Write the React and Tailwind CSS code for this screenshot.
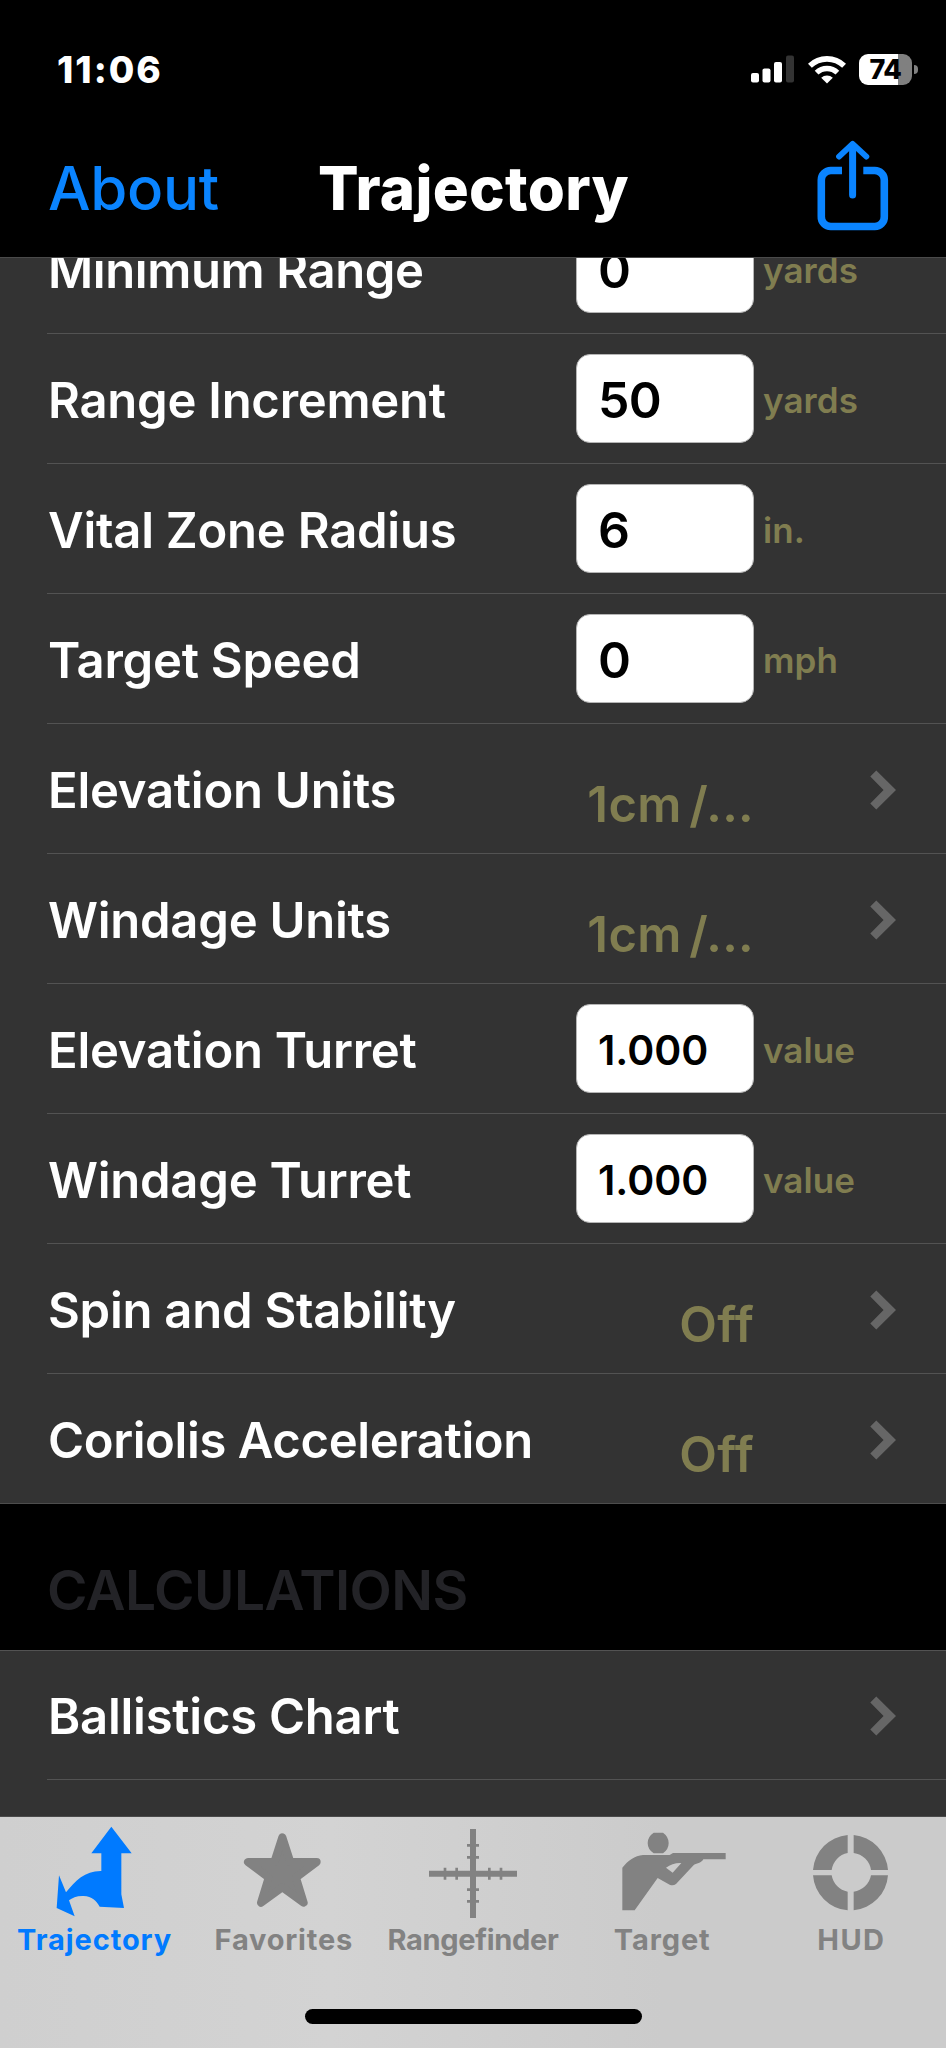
import React from "react";

const settings = [
  { label: "Minimum Range", input: "0", unit: "yards", tight: true },
  { label: "Range Increment", input: "50", unit: "yards" },
  { label: "Vital Zone Radius", input: "6", unit: "in." },
  { label: "Target Speed", input: "0", unit: "mph" },
  { label: "Elevation Units", value: "1cm /..." },
  { label: "Windage Units", value: "1cm /..." },
  { label: "Elevation Turret", input: "1.000", unit: "value", small: true },
  { label: "Windage Turret", input: "1.000", unit: "value", small: true },
  { label: "Spin and Stability", value: "Off" },
  { label: "Coriolis Acceleration", value: "Off", tight: true, last: true },
];

const Chevron = () => (
  <svg width="26" height="40" viewBox="0 0 26 40" fill="#666666" className="mt-[2px] shrink-0">
    <path d="M6.3 0.5 L26 20 L6.3 39.4 L0.3 33.4 L13.6 20 L0.3 6.6 Z" />
  </svg>
);

const Row = ({ label, input, unit, value, small, tight, last }) => (
  <div className={last ? "border-b border-[#4d4d4d]" : ""}>
    <div
      className={`ml-[47px] flex items-center pl-px ${
        last ? "h-[129px]" : "h-[130px] border-b border-[#535353]"
      }`}
    >
      <span
        className={`w-[528px] shrink-0 pt-[3px] text-[49px] leading-none font-semibold whitespace-nowrap text-white ${
          tight ? "tracking-[-0.4px]" : "tracking-[-0.25px]"
        }`}
      >
        {label}
      </span>
      {input ? (
        <>
          <input
            defaultValue={input}
            className={`h-[89px] w-[178px] shrink-0 rounded-[14px] border border-[#b5b5b5] bg-white pt-[3px] pl-[21px] font-semibold text-black outline-none ${
              small ? "text-[41px]" : "text-[50px] tracking-[-0.6px]"
            }`}
          />
          <span className="ml-[9px] pt-[3px] text-[35px] leading-none font-semibold tracking-[0.1px] text-[#807d50]">
            {unit}
          </span>
        </>
      ) : (
        <>
          <span className="w-[178px] shrink-0 pt-[31px] text-right text-[49px] leading-none font-semibold tracking-[0.3px] whitespace-nowrap text-[#807d50] [word-spacing:-5px]">
            {value}
          </span>
          <span className="ml-[116px]">
            <Chevron />
          </span>
        </>
      )}
    </div>
  </div>
);

const StatusBar = () => (
  <div className="flex h-[138px] items-center justify-between pr-[28px] pl-[57px] text-white">
    <span className="text-[37px] leading-none font-extrabold tracking-[2px]">11:06</span>
    <div className="flex items-center">
      <svg width="43" height="28" viewBox="0 0 43 28" fill="#ffffff">
        <rect x="0" y="18" width="8" height="9.5" rx="2" />
        <rect x="11.5" y="13.5" width="8" height="14" rx="2" />
        <rect x="23" y="7" width="8" height="20.5" rx="2" />
        <rect x="35" y="0.5" width="8" height="27" rx="2" fill="#333333" />
      </svg>
      <svg width="38" height="29" viewBox="0 0 38 29" fill="none" stroke="#ffffff" className="ml-[14px]">
        <path d="M1.9 10.8 A24.5 24.5 0 0 1 36.1 10.8" strokeWidth="5.6" />
        <path d="M8.6 17.6 A15.2 15.2 0 0 1 29.4 17.6" strokeWidth="5.4" />
        <path d="M19 28.5 L13.2 22.7 A8.6 8.6 0 0 1 24.8 22.7 Z" fill="#ffffff" stroke="none" />
      </svg>
      <div className="ml-[13px] flex h-[31px] w-[53px] items-center justify-center rounded-[9px] bg-linear-to-r from-white from-74% to-[#808080] to-74% text-[27px] leading-none font-extrabold tracking-[-0.5px] text-black">
        74
      </div>
      <div className="ml-[2px] h-[9px] w-[4px] rounded-r-full bg-[#808080]" />
    </div>
  </div>
);

const NavBar = () => (
  <div className="flex h-[119px] items-center pr-[57px] pb-[19px] pl-[48px]">
    <span className="w-[270px] text-[60px] leading-none font-medium tracking-[-0.3px] text-[#0a84ff]">About</span>
    <h1 className="flex-1 text-[60px] leading-none font-extrabold tracking-[0.3px] text-white">Trajectory</h1>
    <svg
      width="72"
      height="92"
      viewBox="0 0 72 92"
      fill="none"
      stroke="#0a84ff"
      strokeWidth="7.6"
      className="-mt-[4px]"
    >
      <path d="M25 30.5 H14 A9.5 9.5 0 0 0 4.3 40 V76.5 A9.5 9.5 0 0 0 14 86.5 H57.5 A9.5 9.5 0 0 0 67.3 76.5 V40 A9.5 9.5 0 0 0 57.5 30.5 H46.3" />
      <path d="M35.6 55 V5.5" strokeWidth="7" strokeLinecap="round" />
      <path d="M22 16.6 L35.6 3.8 L49.4 16.6" strokeWidth="5.8" strokeLinecap="round" strokeLinejoin="round" />
    </svg>
  </div>
);

const tabs = [
  {
    label: "Trajectory",
    text: "tracking-[0.9px]",
    active: true,
    viewBox: "86 72 396 285",
    icon: (
      <path d="M333 80 L394 160 H363 V283 L371 324 L298 320 C288 302 275 289 250 288 C230 287 216 293 206 301 L223 349 L169 324 L176 226 L197 277 C225 242 255 212 303 213 V160 H273 Z" />
    ),
  },
  {
    label: "Favorites",
    text: "tracking-[0.8px]",
    viewBox: "653 72 396 285",
    icon: (
      <path
        d="M846 112 L870 186 H949 L887 233 L910 308 L846 262 L782 308 L805 233 L743 186 H822 Z"
        stroke="currentColor"
        strokeWidth="24"
        strokeLinejoin="round"
      />
    ),
  },
  {
    label: "Rangefinder",
    text: "tracking-[-0.3px]",
    viewBox: "81 72 396 285",
    icon: (
      <path d="M270 87 h18 v267 h-18 Z M147 212 h264 v18 h-264 Z M261 132 h36 v8 h-36 Z M261 168 h36 v8 h-36 Z M261 265 h36 v8 h-36 Z M261 300 h36 v8 h-36 Z M191 203 h8 v36 h-8 Z M226 203 h8 v36 h-8 Z M324 203 h8 v36 h-8 Z M359 203 h8 v36 h-8 Z" />
    ),
  },
  {
    label: "Target",
    text: "tracking-[0.9px]",
    viewBox: "649 72 396 285",
    icon: (
      <path
        fillRule="evenodd"
        d="M822 98 H850 Q867 110 867 129 Q867 148 850 160 H822 Q804 148 804 129 Q804 110 822 98 Z M728 331 V203 C745 182 765 167 790 165 H870 L880 159 H1038 V178 H971 C967 187 957 189 943 194 L889 252 Q880 259 870 254 L834 234 L765 331 Z M859 203 L879 218 L905 189 C888 188 872 194 859 203 Z"
      />
    ),
  },
  {
    label: "HUD",
    text: "tracking-[1.4px]",
    viewBox: "256 72 396 285",
    icon: (
      <path d="M444 105 A114 114 0 0 0 340 210 H396 A60 60 0 0 1 444 159 Z M462 105 A114 114 0 0 1 565 210 H514 A60 60 0 0 0 462 159 Z M340 226 A114 114 0 0 0 444 331 V275 A60 60 0 0 1 396 226 Z M565 226 A114 114 0 0 1 462 331 V275 A60 60 0 0 0 514 226 Z" />
    ),
  },
];

const TabBar = () => (
  <div className="flex h-[232px] flex-col items-center border-t border-[#4a4a4a] bg-linear-to-r from-[#cfcfcf] via-[#d3d3d3] via-35% to-[#cbcbcb] to-70%">
    <div className="grid w-full grid-cols-5 pt-[7px]">
      {tabs.map((tab) => (
        <div
          key={tab.label}
          className={`flex flex-col items-center ${tab.active ? "text-[#007aff]" : "text-[#828282]"}`}
        >
          <svg width="132" height="95" viewBox={tab.viewBox} fill="currentColor">
            {tab.icon}
          </svg>
          <span className={`mt-[6px] text-[29px] leading-[30px] font-bold whitespace-nowrap ${tab.text}`}>
            {tab.label}
          </span>
        </div>
      ))}
    </div>
    <div className="mt-[54px] h-[15px] w-[337px] rounded-full bg-black" />
  </div>
);

const App = () => {
  return (
    <div className="flex h-[2048px] w-[946px] flex-col overflow-hidden bg-black font-['Inter',sans-serif]">
      <header className="h-[257px] shrink-0">
        <StatusBar />
        <NavBar />
      </header>
      {/* list is scrolled, so the first row sits partly under the header */}
      <main className="h-[1559px] shrink-0 overflow-hidden border-t border-[#4a4a4a] bg-[#333333]">
        <div className="-mt-[54px]">
          {settings.map((item) => (
            <Row key={item.label} {...item} />
          ))}
        </div>
        <h2 className="h-[147px] border-b border-[#535353] bg-black pt-[59px] pl-[47px] text-[55px] leading-none font-semibold tracking-[-0.55px] text-[#232327]">
          CALCULATIONS
        </h2>
        <div className="-mt-px">
          <Row label="Ballistics Chart" />
        </div>
      </main>
      <TabBar />
    </div>
  );
};

export default App;
